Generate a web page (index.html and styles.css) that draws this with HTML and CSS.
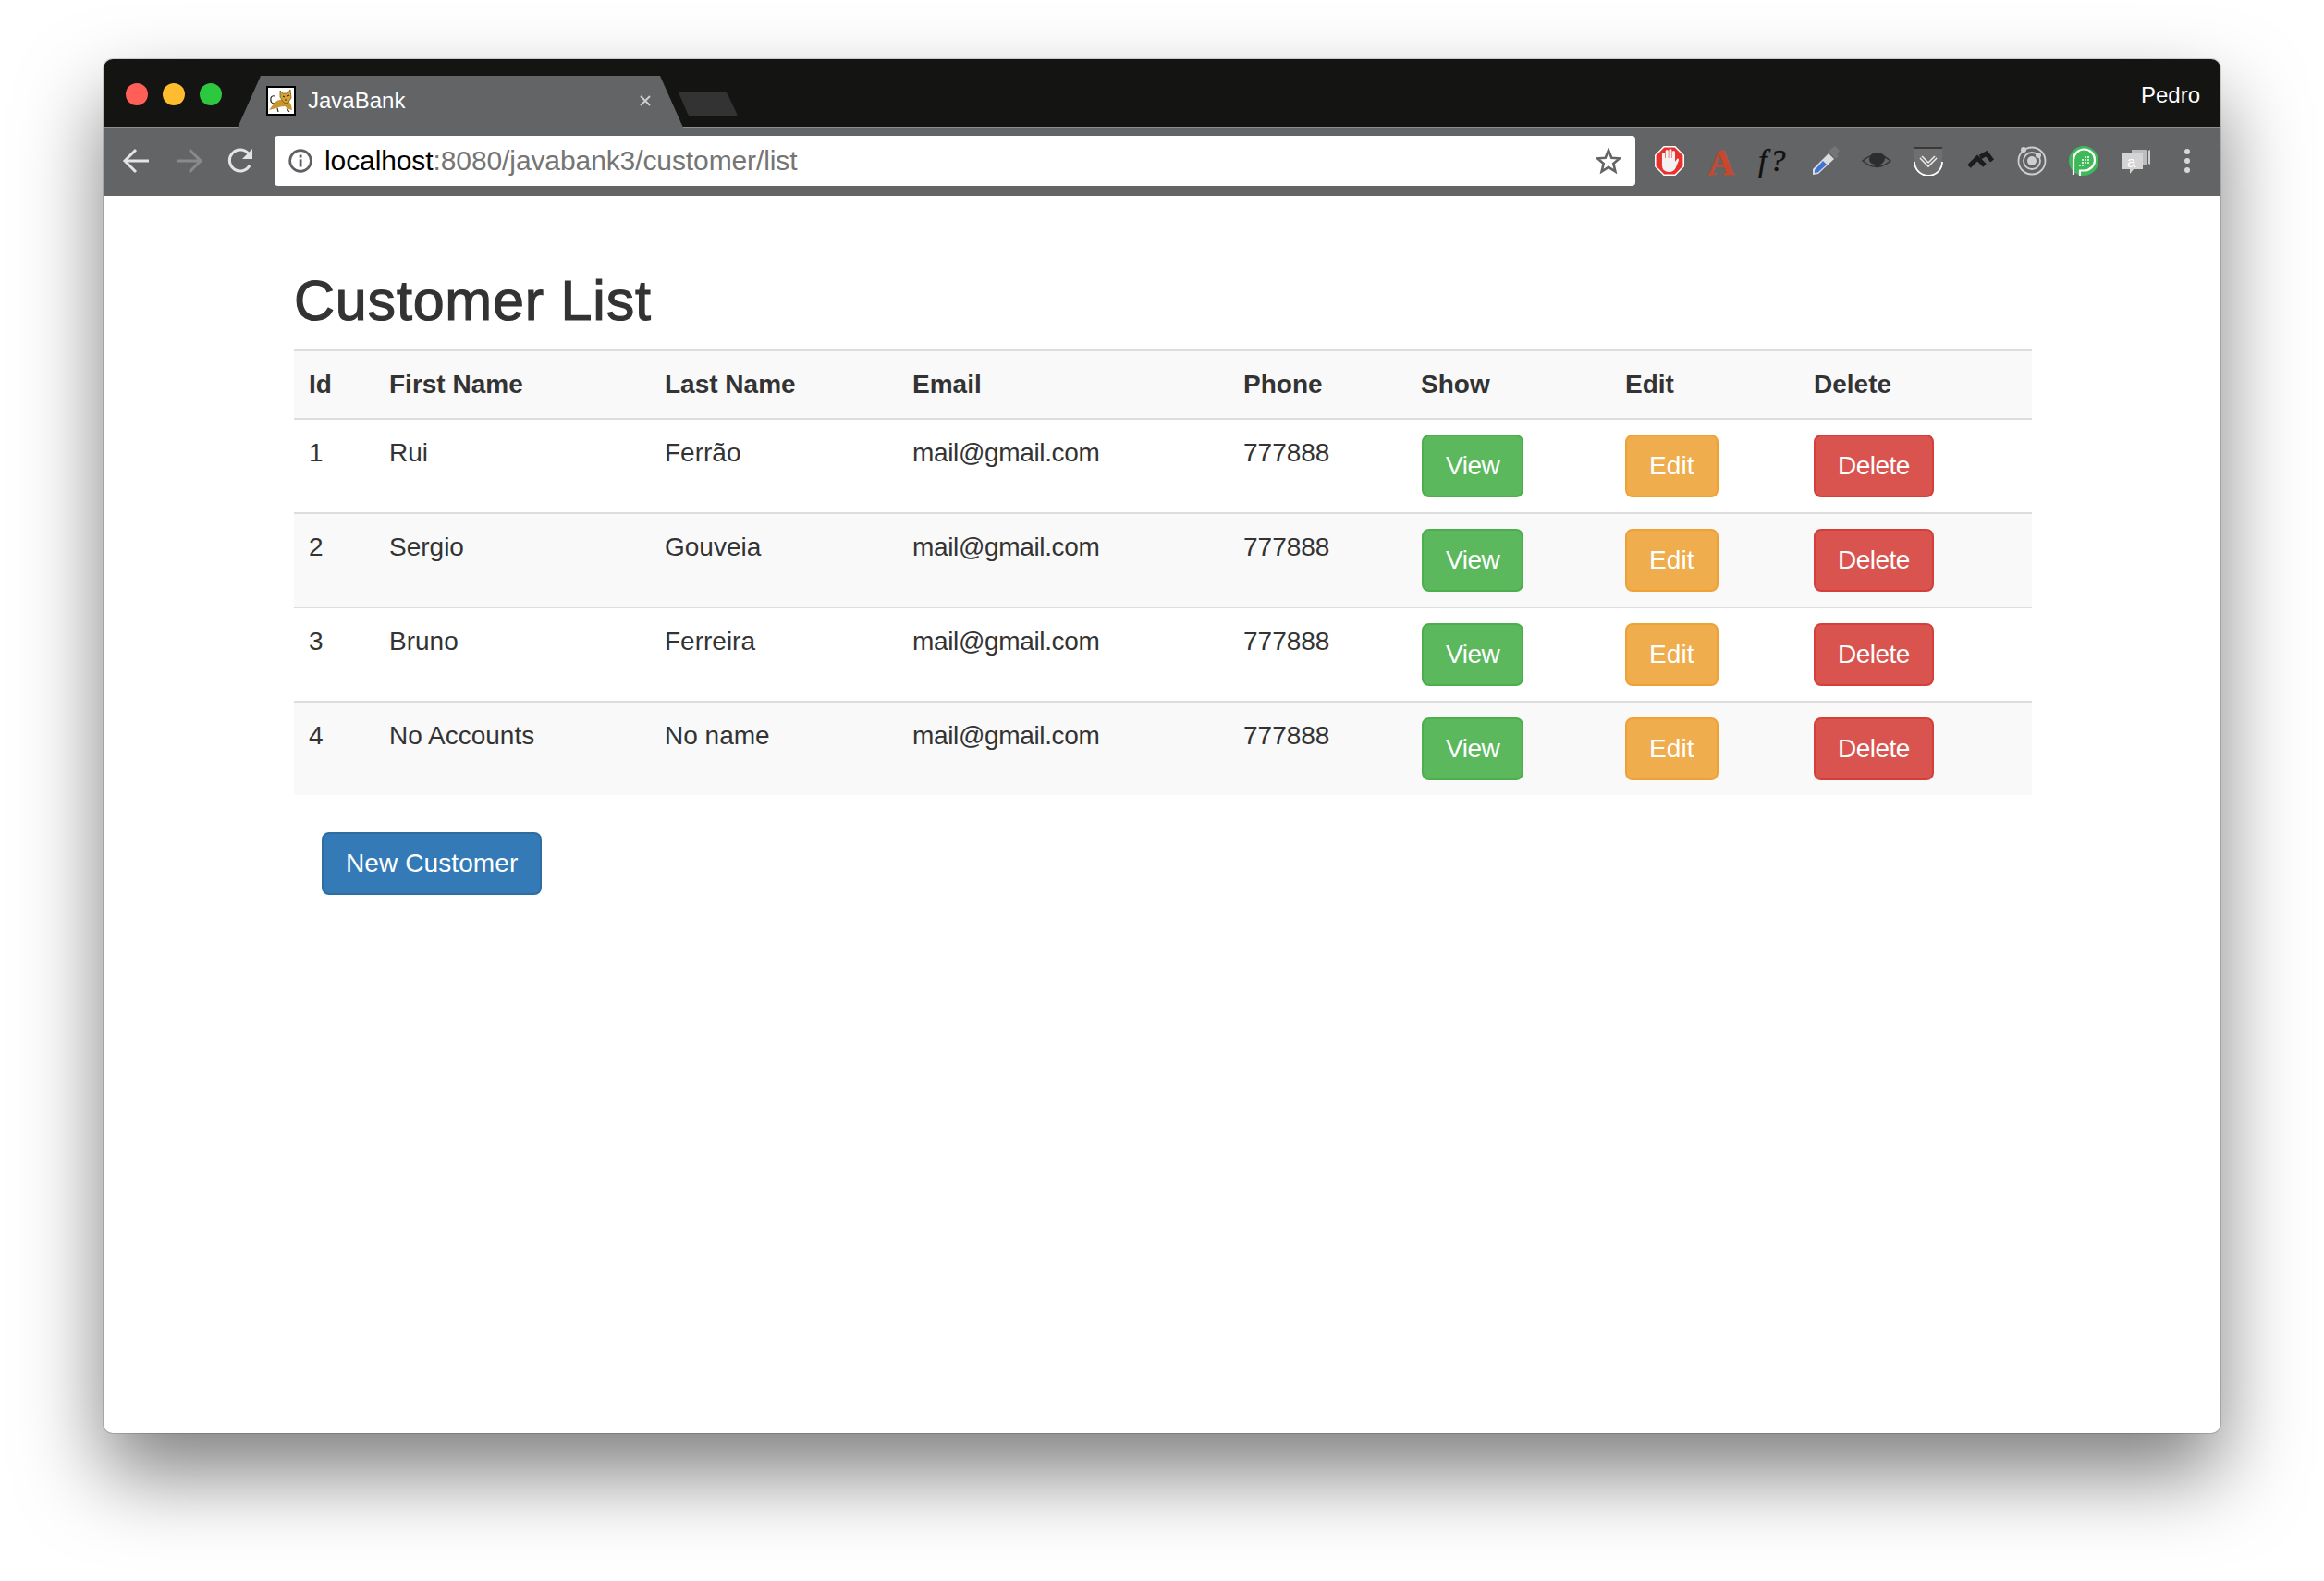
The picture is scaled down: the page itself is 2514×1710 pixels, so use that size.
FILE: index.html
```html
<!DOCTYPE html>
<html lang="en">
<head>
    <meta charset="UTF-8">
    <title>JavaBank</title>
    <link rel="stylesheet" href="styles.css">
</head>
<body>
    <div class="window">
        <div class="titlebar">
            <div class="lights">
                <span class="light red"></span>
                <span class="light yellow"></span>
                <span class="light green"></span>
            </div>
            <div class="tab">
                <svg class="favicon" viewBox="0 0 32 32">
                    <rect x="1" y="1" width="30" height="30" fill="#fff" stroke="#000" stroke-width="2"/>
                    <path d="M3 26 L9 18 Q13 14 18 15 L24 15 L27 21 L28 26 L24 25 L20 22 Q15 22 11 24 L7 25 Z" fill="#c8962e"/>
                    <path d="M15 5 L18 8 L23 8 L26 4 L27 13 L23 19 L19 18 L15 12 Z" fill="#d6a33a" stroke="#6b4a10" stroke-width=".7"/>
                    <path d="M18 11 L20 12 M23 11 L25 10 M20 15 L23 15" stroke="#3a2808" stroke-width="1.2" fill="none"/>
                    <path d="M9 19 Q4 19 5 13 Q6 10 9 11" stroke="#222" stroke-width="1.2" fill="none"/>
                    <path d="M12 24 L13 28 M22 24 L25 28" stroke="#333" stroke-width="1.2"/>
                </svg>
                <span class="tab-title">JavaBank</span>
                <svg class="tab-close" viewBox="0 0 14 14">
                    <path d="M2 2 L12 12 M12 2 L2 12" stroke="#d0d0d0" stroke-width="1.8"/>
                </svg>
            </div>
            <svg class="new-tab" viewBox="0 0 64 29">
                <path d="M3 2 H49 Q51 2 52 4 L62 25 Q63 27 61 27 H14 Q12 27 11 25 L2 4 Q1.500 2 3 2 Z" fill="#333" stroke="#333" stroke-width="2" stroke-linejoin="round"/>
            </svg>
            <span class="profile">Pedro</span>
        </div>

        <div class="toolbar">
            <div class="nav-buttons">
                <svg class="nav-icon" viewBox="0 0 32 32">
                    <path d="M29 16 H4 M15 4 L3 16 L15 28" fill="none" stroke="#e4e4e4" stroke-width="3"/>
                </svg>
                <svg class="nav-icon" viewBox="0 0 32 32">
                    <path d="M3 16 H28 M17 4 L29 16 L17 28" fill="none" stroke="#8a8a8c" stroke-width="3"/>
                </svg>
                <svg class="nav-icon" viewBox="0 0 32 32">
                    <path d="M26 21 A11.500 11.500 0 1 1 25 8.500" fill="none" stroke="#e4e4e4" stroke-width="3"/>
                    <path d="M29 3 V14 H18 Z" fill="#e4e4e4"/>
                </svg>
            </div>
            <div class="omnibox">
                <svg class="info-icon" viewBox="0 0 24 24">
                    <circle cx="12" cy="12" r="10.500" fill="none" stroke="#5f6063" stroke-width="2.400"/>
                    <rect x="10.800" y="10.500" width="2.600" height="7.500" fill="#5f6063"/>
                    <rect x="10.800" y="6" width="2.600" height="2.800" fill="#5f6063"/>
                </svg>
                <span class="url"><span class="host">localhost</span>:8080/javabank3/customer/list</span>
                <svg class="star-icon" viewBox="0 0 28 28">
                    <path d="M14 2.500 L17.300 10.700 L26 11.300 L19.300 16.900 L21.400 25.500 L14 20.800 L6.600 25.500 L8.700 16.900 L2 11.300 L10.700 10.700 Z" fill="none" stroke="#636466" stroke-width="2.600"/>
                </svg>
            </div>
            <div class="extensions">
                <svg class="ext" viewBox="0 0 32 32">
                    <path d="M10 .8 H22 L31.200 10 V22 L22 31.200 H10 L.8 22 V10 Z" fill="#e8302c" stroke="#fff" stroke-width="1.500"/>
                    <path d="M9.500 8.500 V20 M13.200 5.500 V16 M16.900 4.500 V16 M20.500 6.500 V17" stroke="#f2f2f2" stroke-width="3.100" stroke-linecap="round"/>
                    <path d="M8 13 H22 V17 L24.500 13.500 Q26.500 13 26 15.500 L22.500 24 Q20.500 28 15.500 28 Q8 28 8 21 Z" fill="#f2f2f2"/>
                </svg>
                <span class="ext ext-font">A</span>
                <span class="ext ext-fonts">f?</span>
                <svg class="ext" viewBox="0 0 32 32">
                    <path d="M23 3 L27 0 L32 5 L29 9 L31 11 L28 14 L20 6 Z" fill="#757575"/>
                    <path d="M20 8 L26 14 L9 30 L3 31 L3 25 Z" fill="#dcdcdc"/>
                    <path d="M14 16 L18 20 L8.500 28.500 L5 29 L5 26 Z" fill="#3f73d8"/>
                </svg>
                <svg class="ext" viewBox="0 0 32 32">
                    <path d="M1 16 Q16 3 31 16 Q16 29 1 16 Z" fill="none" stroke="#333" stroke-width="1.500"/>
                    <path d="M8 14 Q9 7 17 7 Q26 8 25 14 Q24 18 20 20 L19 23 L14 22 L14 20 Q8 19 8 14 Z" fill="#2d2d2d"/>
                </svg>
                <svg class="ext" viewBox="0 0 32 32">
                    <path d="M1 2 H31 V17 A15 15 0 0 1 1 17 Z" fill="#6f6f70"/>
                    <path d="M1 2 H31" stroke="#3a3a3a" stroke-width="2"/>
                    <path d="M1 17 A15 15 0 0 0 31 17" fill="none" stroke="#fff" stroke-width="1.800"/>
                    <path d="M8 12 L16 20 L24 12" fill="none" stroke="#ececec" stroke-width="4.500"/>
                    <path d="M8 12 L16 20 L24 12" fill="none" stroke="#6f6f70" stroke-width="1.500"/>
                </svg>
                <svg class="ext" viewBox="0 0 32 32">
                    <path d="M4 22 L13 13 L21 21" fill="none" stroke="#1c1c1c" stroke-width="5"/>
                    <path d="M16 12 L23 8 L29 16" fill="none" stroke="#1c1c1c" stroke-width="5"/>
                </svg>
                <svg class="ext" viewBox="0 0 32 32">
                    <circle cx="16" cy="16" r="14.500" fill="none" stroke="#cfcfcf" stroke-width="1.800"/>
                    <circle cx="16" cy="16" r="9" fill="none" stroke="#cfcfcf" stroke-width="1.800"/>
                    <circle cx="16" cy="16" r="5" fill="#cfcfcf"/>
                    <circle cx="7" cy="4" r="3" fill="#cfcfcf"/>
                    <circle cx="23" cy="10" r="3" fill="#cfcfcf"/>
                </svg>
                <svg class="ext" viewBox="0 0 32 32">
                    <circle cx="16" cy="16" r="16" fill="#3fb85a"/>
                    <path d="M5 31 V15 A11.500 11.500 0 1 1 16.500 26.500 H12 V32" fill="none" stroke="#fff" stroke-width="2.200"/>
                    <path d="M12 21 v.1 M15 21 v.1 M15 18 v.1 M18 18 v.1 M15 15 v.1 M18 15 v.1 M21 15 v.1 M18 12 v.1 M21 12 v.1 M21 18 v.1" stroke="#fff" stroke-width="2" stroke-linecap="round"/>
                </svg>
                <span class="ext ext-chat">
                    <svg class="ext-chat-bg" viewBox="0 0 32 32">
                        <path d="M12 4 H27 Q28 4 28 5 V21 H24 V8 H12 Z" fill="#bdbdbd"/>
                        <path d="M30 5 L32 4 V20 L30 19 Z" fill="#cfcfcf"/>
                        <path d="M2 8 H24 V25 H14 L10 30 V25 H2 Q1 25 1 24 V9 Q1 8 2 8 Z" fill="#d4d4d4"/>
                    </svg>
                    <span class="ext-chat-a">a</span>
                </span>
                <svg class="ext" viewBox="0 0 32 32">
                    <circle cx="16" cy="6" r="3" fill="#d8d8d8"/>
                    <circle cx="16" cy="16" r="3" fill="#d8d8d8"/>
                    <circle cx="16" cy="26" r="3" fill="#d8d8d8"/>
                </svg>
            </div>
        </div>

        <div class="page">
            <h2>Customer List</h2>
            <table class="customers">
                <thead>
                    <tr>
                        <th>Id</th>
                        <th>First Name</th>
                        <th>Last Name</th>
                        <th>Email</th>
                        <th>Phone</th>
                        <th>Show</th>
                        <th>Edit</th>
                        <th>Delete</th>
                    </tr>
                </thead>
                <tbody>
                    <tr>
                        <td>1</td>
                        <td>Rui</td>
                        <td>Ferrão</td>
                        <td class="email">mail@gmail.com</td>
                        <td>777888</td>
                        <td><a class="btn btn-success">View</a></td>
                        <td><a class="btn btn-warning">Edit</a></td>
                        <td><a class="btn btn-danger">Delete</a></td>
                    </tr>
                    <tr>
                        <td>2</td>
                        <td>Sergio</td>
                        <td>Gouveia</td>
                        <td class="email">mail@gmail.com</td>
                        <td>777888</td>
                        <td><a class="btn btn-success">View</a></td>
                        <td><a class="btn btn-warning">Edit</a></td>
                        <td><a class="btn btn-danger">Delete</a></td>
                    </tr>
                    <tr>
                        <td>3</td>
                        <td>Bruno</td>
                        <td>Ferreira</td>
                        <td class="email">mail@gmail.com</td>
                        <td>777888</td>
                        <td><a class="btn btn-success">View</a></td>
                        <td><a class="btn btn-warning">Edit</a></td>
                        <td><a class="btn btn-danger">Delete</a></td>
                    </tr>
                    <tr>
                        <td>4</td>
                        <td>No Accounts</td>
                        <td>No name</td>
                        <td class="email">mail@gmail.com</td>
                        <td>777888</td>
                        <td><a class="btn btn-success">View</a></td>
                        <td><a class="btn btn-warning">Edit</a></td>
                        <td><a class="btn btn-danger">Delete</a></td>
                    </tr>
                </tbody>
            </table>
            <a class="btn btn-primary new-customer">New Customer</a>
        </div>
    </div>
</body>
</html>
```

FILE: styles.css
```css
html, body {
    margin: 0;
    padding: 0;
    background-color: #fff;
}
body {
    font-family: "Liberation Sans", Arial, sans-serif;
    font-size: 28px;
    line-height: 40px;
    color: #333;
    padding: 64px 112px 160px;
}
.window {
    height: 1486px;
    display: flex;
    flex-direction: column;
    border-radius: 10px;
    background-color: #fff;
    box-shadow: 0 44px 88px rgba(0, 0, 0, .5), 0 0 0 1px rgba(0, 0, 0, .15);
}

/* title bar */
.titlebar {
    height: 73px;
    flex: none;
    display: flex;
    align-items: flex-start;
    padding-left: 24px;
    background-color: #141413;
    border-radius: 10px 10px 0 0;
}
.lights {
    display: flex;
    gap: 16px;
    margin-top: 26px;
    margin-right: 17px;
}
.light {
    width: 24px;
    height: 24px;
    border-radius: 50%;
}
.light.red { background-color: #ff5f57; }
.light.yellow { background-color: #febc2e; }
.light.green { background-color: #2bc840; }
.tab {
    width: 482px;
    height: 56px;
    margin-top: 18px;
    box-sizing: border-box;
    display: flex;
    align-items: center;
    padding: 0 34px 2px 31px;
    background-color: #636466;
    clip-path: polygon(25px 0, 457px 0, 482px 100%, 0 100%);
    position: relative;
    z-index: 1;
}
.favicon {
    width: 32px;
    height: 32px;
    flex: none;
}
.tab-title {
    margin-left: 13px;
    font-size: 24px;
    line-height: 28px;
    color: #fff;
    flex: 1;
}
.tab-close {
    width: 14px;
    height: 14px;
}
.new-tab {
    width: 64px;
    height: 29px;
    margin-top: 34px;
    margin-left: -5px;
}
.profile {
    margin-left: auto;
    margin-top: 25px;
    padding-right: 22px;
    font-size: 24px;
    line-height: 28px;
    color: #fff;
}

/* toolbar */
.toolbar {
    height: 75px;
    flex: none;
    box-sizing: border-box;
    display: flex;
    align-items: center;
    padding: 0 0 2px 20px;
    background-color: #636466;
    border-top: 1px solid #8e8e8e;
}
.nav-buttons {
    display: flex;
    gap: 24px;
}
.nav-icon {
    width: 32px;
    height: 32px;
}
.omnibox {
    width: 1472px;
    height: 54px;
    margin-left: 21px;
    box-sizing: border-box;
    display: flex;
    align-items: center;
    padding: 0 15px;
    background-color: #fff;
    border-radius: 4px;
}
.info-icon {
    width: 26px;
    height: 26px;
    flex: none;
}
.url {
    margin-left: 13px;
    flex: 1;
    font-size: 30px;
    letter-spacing: -.1px;
    color: #757575;
}
.host {
    color: #000;
}
.star-icon {
    width: 28px;
    height: 28px;
}
.extensions {
    display: flex;
    gap: 24px;
    margin-left: 21px;
}
.ext {
    display: block;
    width: 32px;
    height: 32px;
    flex: none;
}
.ext-font {
    font-family: "Liberation Serif", serif;
    font-weight: bold;
    font-size: 40px;
    line-height: 36px;
    text-align: center;
    color: #c8482e;
    -webkit-text-stroke: .6px #c8482e;
}
.ext-fonts {
    font-family: "Liberation Serif", serif;
    font-style: italic;
    font-size: 34px;
    line-height: 32px;
    letter-spacing: 3px;
    white-space: nowrap;
    color: #111;
    -webkit-text-stroke: .3px #111;
}
.ext-chat {
    position: relative;
}
.ext-chat-bg {
    display: block;
    width: 32px;
    height: 32px;
}
.ext-chat-a {
    position: absolute;
    left: 7px;
    top: 9px;
    font-size: 17px;
    line-height: 18px;
    color: #fff;
}

/* page content */
.page {
    flex: 1;
    padding: 80px 205px 0 206px;
}
h2 {
    margin: 0 0 20px;
    font-size: 61px;
    font-weight: normal;
    line-height: 66px;
    letter-spacing: .8px;
    color: #333;
    -webkit-text-stroke: 1.2px #333;
}
.customers {
    width: 1880px;
    table-layout: fixed;
    border-collapse: separate;
    border-spacing: 0;
}
.customers th, .customers td {
    padding: 16px;
    text-align: left;
    vertical-align: top;
    border-top: 2px solid #ddd;
}
.customers th {
    font-weight: bold;
    background-color: #f9f9f9;
}
.customers tbody tr:nth-child(even) td {
    background-color: #f9f9f9;
}
.customers th:nth-child(1) { width: 55px; }
.customers th:nth-child(2) { width: 266px; }
.customers th:nth-child(3) { width: 236px; }
.customers th:nth-child(4) { width: 326px; }
.customers th:nth-child(5) { width: 160px; }
.customers th:nth-child(6) { width: 189px; }
.customers th:nth-child(7) { width: 172px; }
.customers .email {
    letter-spacing: -.35px;
}
.customers .btn {
    letter-spacing: -.5px;
}
.customers .btn-success {
    margin-left: 1px;
}
.customers .btn-warning {
    letter-spacing: .1px;
}

.btn {
    display: block;
    width: fit-content;
    box-sizing: border-box;
    height: 68px;
    padding: 12px 24px;
    border: 2px solid transparent;
    border-radius: 8px;
    color: #fff;
    font-size: 28px;
    line-height: 40px;
}
.btn-success {
    background-color: #5cb85c;
    border-color: #4cae4c;
}
.btn-warning {
    background-color: #f0ad4e;
    border-color: #eea236;
}
.btn-danger {
    background-color: #d9534f;
    border-color: #d43f3a;
}
.btn-primary {
    background-color: #337ab7;
    border-color: #2e6da4;
}
.new-customer {
    margin: 40px 0 0 30px;
    letter-spacing: .1px;
}
```
